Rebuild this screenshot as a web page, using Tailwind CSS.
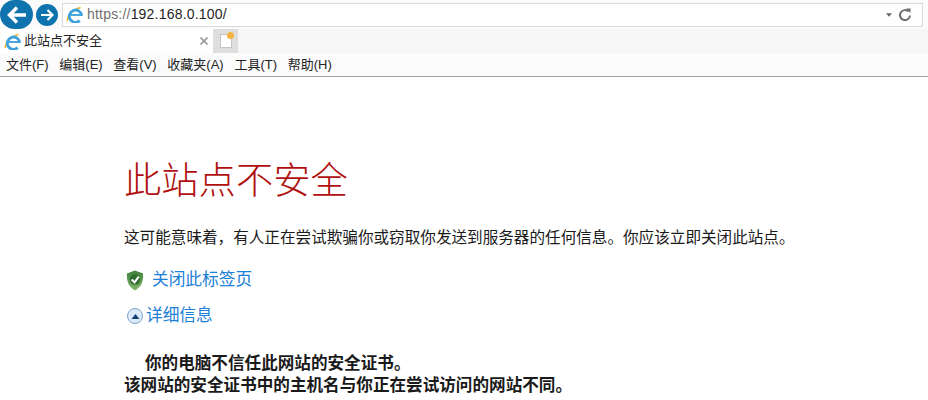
<!DOCTYPE html>
<html lang="zh-CN">
  <head>
    <meta charset="UTF-8" />
    <title>此站点不安全</title>
    <script src="https://cdn.jsdelivr.net/npm/@tailwindcss/browser@4"></script>
  </head>
  <body>
    <div class="w-[928px] h-[400px] overflow-hidden bg-white font-['Liberation_Sans','Noto_Sans_CJK_SC',sans-serif]">
      <!-- address bar -->
      <div class="h-[29px] flex items-center bg-[#fbfbfb]">
        <div class="w-[33px] h-[29px] rounded-full bg-[#0f74ad] flex items-center justify-center">
          <svg width="22" height="20" viewBox="0 0 22 20" fill="none" stroke="#fff" stroke-width="3.4">
            <path d="M20 10H4M11 2.500 3.500 10l7.500 7.500" />
          </svg>
        </div>
        <div class="w-[22px] h-[22px] ml-[3px] rounded-full bg-[#0f74ad] flex items-center justify-center">
          <svg width="14" height="14" viewBox="0 0 14 14" fill="none" stroke="#fff" stroke-width="2.200">
            <path d="M1 7h11M7.500 2l5 5-5 5" />
          </svg>
        </div>
        <div class="w-[861px] h-[24px] ml-[4px] border border-[#d9d9d9] bg-white flex items-center">
          <svg class="ml-[3px]" width="17" height="17" viewBox="0 0 18 18" fill="none">
            <path d="M1.500 16C.5 12 6 4 15.500 1.500" stroke="#f2b632" stroke-width="1.700" />
            <path d="M16.500 10.500a6.500 6.500 0 1 0-2 5" stroke="#3fa3dd" stroke-width="3" />
            <path d="M4 9.500h12" stroke="#3fa3dd" stroke-width="2" />
          </svg>
          <div class="ml-[4px] text-[14px] tracking-[0.2px] text-[#1f1f1f]"><span class="text-[#6f6f6f]">https://</span>192.168.0.100/</div>
          <div class="ml-auto mr-[10px] flex items-center gap-[6px]">
            <svg width="6" height="4" viewBox="0 0 7 4"><path d="M0 0h7L3.500 4z" fill="#666" /></svg>
            <svg width="14" height="14" viewBox="0 0 14 14" fill="none" stroke="#6b6b6b" stroke-width="2">
              <path d="M10.500 3.500a5 5 0 1 0 1.500 4" />
              <path d="M8 .5h4.500V5z" fill="#6b6b6b" stroke="none" />
            </svg>
          </div>
        </div>
      </div>
      <!-- tab row -->
      <div class="h-[24px] flex items-stretch bg-[#f6f6f6]">
        <div class="w-[213px] bg-white flex items-center">
          <svg class="ml-[4px]" width="17" height="17" viewBox="0 0 18 18" fill="none">
            <path d="M1.500 16C.5 12 6 4 15.500 1.500" stroke="#f2b632" stroke-width="1.700" />
            <path d="M16.500 10.500a6.500 6.500 0 1 0-2 5" stroke="#3fa3dd" stroke-width="3" />
            <path d="M4 9.500h12" stroke="#3fa3dd" stroke-width="2" />
          </svg>
          <span class="ml-[3px] text-[13px] text-[#222]">此站点不安全</span>
          <svg class="ml-auto mr-[5px]" width="8" height="8" viewBox="0 0 8 8" stroke="#9a9a9a" stroke-width="1.600">
            <path d="M.5.500l7 7M7.500.500l-7 7" />
          </svg>
        </div>
        <div class="w-[25px] bg-[#dedede] flex items-center justify-center">
          <div class="relative w-[12px] h-[14px] bg-white border border-[#c4c4c4]">
            <div class="absolute -top-[3px] -right-[3px] w-[7px] h-[7px] rounded-full bg-[#f4b642]"></div>
          </div>
        </div>
      </div>
      <!-- menu -->
      <div class="h-[24px] flex items-center gap-[10.700px] pl-[6px] bg-[#fbfbfb] border-b border-[#a0a0a0] text-[13px] text-[#222]">
        <span>文件(F)</span>
        <span>编辑(E)</span>
        <span>查看(V)</span>
        <span>收藏夹(A)</span>
        <span>工具(T)</span>
        <span>帮助(H)</span>
      </div>
      <!-- error page -->
      <div class="pl-[124px]">
        <h1 class="mt-[76px] text-[37.300px] leading-[56px] font-light text-[#b01010]">此站点不安全</h1>
        <p class="mt-[17px] text-[15.600px] leading-[24px] text-[#1a1a1a]">这可能意味着，有人正在尝试欺骗你或窃取你发送到服务器的任何信息。你应该立即关闭此站点。</p>
        <div class="mt-[18px] h-[24px] flex items-center">
          <svg class="ml-[2px]" width="18" height="21" viewBox="0 0 19 21">
            <defs>
              <linearGradient id="shield" x1="0" y1="0" x2="0" y2="1">
                <stop offset="0" stop-color="#3f7f3a" />
                <stop offset="1" stop-color="#7fb86a" />
              </linearGradient>
            </defs>
            <path d="M9.500 0 18 3c.5 8-1.500 14-8.500 18C2.500 17 .5 11 1 3z" fill="url(#shield)" />
            <circle cx="9.500" cy="9.500" r="5.500" fill="#2f6b2c" />
            <path d="M6 9.500l3 3 4.500-6" fill="none" stroke="#fff" stroke-width="2.200" />
          </svg>
          <a class="ml-[8px] text-[16.700px] text-[#1b80d6]">关闭此标签页</a>
        </div>
        <div class="mt-[12px] h-[24px] flex items-center">
          <div class="ml-[3px] w-[16px] h-[16px] rounded-full border border-[#7aa7cf] bg-[#dcebf7] flex items-center justify-center">
            <svg width="9" height="5" viewBox="0 0 8 5"><path d="M4 0l4 5H0z" fill="#12427a" /></svg>
          </div>
          <a class="ml-[3px] text-[16.700px] text-[#1b80d6]">详细信息</a>
        </div>
        <div class="mt-[25px] text-[16.600px] leading-[22px] font-bold text-[#1a1a1a]">
          <p class="pl-[21px]">你的电脑不信任此网站的安全证书。</p>
          <p>该网站的安全证书中的主机名与你正在尝试访问的网站不同。</p>
        </div>
      </div>
    </div>
  </body>
</html>
